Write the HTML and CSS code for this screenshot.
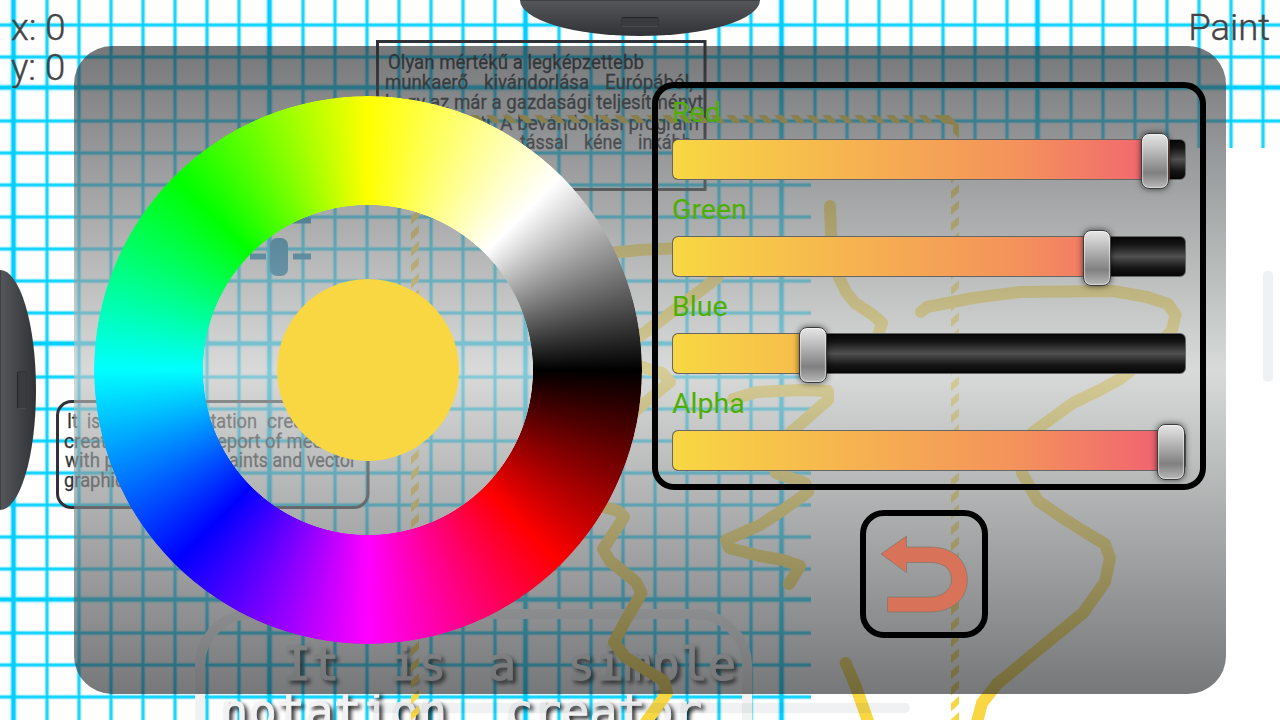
FILE: index.html
```html
<!DOCTYPE html>
<html lang="en">
<head>
<meta charset="utf-8">
<title>Paint</title>
<link rel="stylesheet" href="styles.css">
</head>
<body>
<main class="app">
  <svg class="canvas" width="1280" height="720" viewBox="0 0 1280 720">
    <defs>
      <pattern id="grid" x="13.5" y="87.5" width="256" height="256" patternUnits="userSpaceOnUse">
        <g class="halo">
          <path d="M0 0V256M256 0V256M0 0H256M0 256H256" stroke-width="7"/>
          <path d="M33.5 0V256M65.5 0V256M97.5 0V256M129.5 0V256M161.5 0V256M193.5 0V256M225.5 0V256M0 33.5H256M0 65.5H256M0 97.5H256M0 129.5H256M0 161.5H256M0 193.5H256M0 225.5H256" stroke-width="5"/>
        </g>
        <g class="core">
          <path d="M0 0V256M256 0V256M0 0H256M0 256H256" stroke-width="4.2"/>
          <path d="M33.5 0V256M65.5 0V256M97.5 0V256M129.5 0V256M161.5 0V256M193.5 0V256M225.5 0V256M0 33.5H256M0 65.5H256M0 97.5H256M0 129.5H256M0 161.5H256M0 193.5H256M0 225.5H256" stroke-width="2.4"/>
        </g>
      </pattern>
      <pattern id="hatchLeft" x="411" y="225" width="8" height="16" patternUnits="userSpaceOnUse">
        <path d="M8 0V8L0 15.5V7.5Z" fill="#f8d743"/>
      </pattern>
      <pattern id="hatchRight" x="951" y="184" width="8" height="16" patternUnits="userSpaceOnUse">
        <path d="M8 0V8L0 15.5V7.5Z" fill="#f8d743"/>
      </pattern>
      <pattern id="hatchTop" x="806" y="115" width="16" height="8" patternUnits="userSpaceOnUse">
        <path d="M0 0H8L15.500 8H7.500Z" fill="#f8d743"/>
      </pattern>
    </defs>
    <path d="M0 0H1280V148H811V720H0Z" fill="url(#grid)"/>

    <rect class="frame" x="377.500" y="41.500" width="327.500" height="148"/>
    <g class="note">
      <text x="388" y="69" textLength="256" lengthAdjust="spacingAndGlyphs">Olyan mértékű a legképzettebb</text>
      <text x="385" y="89" textLength="83" lengthAdjust="spacingAndGlyphs">munkaerő</text>
      <text x="484" y="89" textLength="105" lengthAdjust="spacingAndGlyphs">kivándorlása</text>
      <text x="605" y="89" textLength="88" lengthAdjust="spacingAndGlyphs">Európából,</text>
      <text x="385" y="109" textLength="318" lengthAdjust="spacingAndGlyphs">hogy az már a gazdasági teljesítményt</text>
      <text x="480" y="129.500" textLength="219" lengthAdjust="spacingAndGlyphs">ti. A bevándorlási program</text>
      <text x="520" y="149" textLength="48" lengthAdjust="spacingAndGlyphs">tással</text>
      <text x="584" y="149" textLength="38" lengthAdjust="spacingAndGlyphs">kéne</text>
      <text x="638" y="149" textLength="54" lengthAdjust="spacingAndGlyphs">inkább</text>
    </g>

    <rect class="frame" x="57.500" y="401.500" width="310.500" height="106" rx="14"/>
    <g class="note">
      <text x="67" y="428" textLength="11" lengthAdjust="spacingAndGlyphs">It</text>
      <text x="87" y="428" textLength="13" lengthAdjust="spacingAndGlyphs">is</text>
      <text x="190" y="428" textLength="67" lengthAdjust="spacingAndGlyphs">notation</text>
      <text x="267" y="428" textLength="60" lengthAdjust="spacingAndGlyphs">creator</text>
      <text x="64" y="447.500" textLength="53" lengthAdjust="spacingAndGlyphs">create</text>
      <text x="211" y="447.500" textLength="112" lengthAdjust="spacingAndGlyphs">report of med</text>
      <text x="65" y="467" textLength="50" lengthAdjust="spacingAndGlyphs">with p</text>
      <text x="219" y="467" textLength="137" lengthAdjust="spacingAndGlyphs">paints and vector</text>
      <text x="64" y="486.500" textLength="70" lengthAdjust="spacingAndGlyphs">graphics</text>
    </g>

    <path class="tool" d="M250 253.500H266V259.500H250ZM293 253.500H311V259.500H293ZM285 217.500H311V223.500H285Z"/>
    <rect class="tool" x="270" y="238" width="18" height="38" rx="7"/>

    <rect class="bigframe" x="200" y="614" width="547" height="200" rx="52"/>
    <g class="bignote">
      <text x="283" y="680">It</text>
      <text x="390" y="680">is</text>
      <text x="488" y="680">a</text>
      <text x="567" y="680" textLength="169">simple</text>
      <text x="220" y="727" textLength="227">notation</text>
      <text x="505" y="727" textLength="197">creator</text>
    </g>

    <rect x="411" y="119" width="8" height="601" fill="url(#hatchLeft)"/>
    <rect x="415" y="115" width="523" height="8" fill="url(#hatchTop)"/>
    <path d="M934.500 115H949L959 125V138L953 133V125L943 123Z" fill="#f8d743"/>
    <rect x="951" y="142" width="8" height="578" fill="url(#hatchRight)"/>

    <g class="ink">
      <path d="M830 206L831 233L839 277L846 292L855 303L873 315L882 323L878 336"/>
      <path d="M921 312L927 307L973 298L1020 292L1113 291L1147 297L1168 304L1175.500 315L1172 330L1150 355L1120 379L1100 390L1073 403L1033 432L1020 455L1022 473L1038 501L1063 518L1085 532L1105 544L1110 558L1105 582L1083 613L997 684L982 703L977 722"/>
      <path d="M845.700 663L856 687L869 724"/>
      <path d="M600 254L640 250L700 247L725 255L717 278L640 336L600 355L642 367L662 373L670 382L640 407L590 450L590 503L618 511L624 517L603 549L610 561L636 582L641.500 593L627 618L614 642L625 657L664 681L667 693L646 722"/>
      <path d="M733 399L757 392L800 390L828 391L828 400L790 433L770 455L776 473L805 483L808 492L783 510L760 525L726 540L729 548L760 556L783 560L800 566L789 584"/>
    </g>

    <rect class="scroll" x="370" y="703" width="540" height="10" rx="5"/>
    <rect class="scroll" x="1263" y="270.500" width="10" height="111.500" rx="5"/>
  </svg>

  <p class="readout">x: 0<br>y: 0</p>
  <p class="mode">Paint</p>
  <div class="drawer drawer-top"><i></i></div>
  <div class="drawer drawer-left"><i></i></div>

  <section class="panel">
    <div class="wheel"><div class="swatch"></div></div>
    <div class="side">
      <div class="sliders">
        <label>Red</label>
        <div class="track"><div class="fill" style="width:497px"></div><b style="left:468px"></b></div>
        <label>Green</label>
        <div class="track"><div class="fill" style="width:438px"></div><b style="left:410px"></b></div>
        <label>Blue</label>
        <div class="track"><div class="fill" style="width:154px"></div><b style="left:126px"></b></div>
        <label>Alpha</label>
        <div class="track"><div class="fill" style="width:512px"></div><b style="left:484px"></b></div>
      </div>
      <div class="back">
        <svg width="128" height="128" viewBox="860 510 128 128">
          <path d="M881 554L906.500 536V547H930C955 547 967.300 562 967.300 580C967.300 600 951 612 930 612H887.500V597H930C943 597 951.500 589 951.500 580C951.500 569 944 562.500 930 562.500H906.500V572.500Z"/>
        </svg>
      </div>
    </div>
  </section>
</main>
</body>
</html>
```
FILE: styles.css
```css
* { box-sizing: border-box; }
body { margin: 0; background: #fff; font-family: Roboto, "Noto Sans", sans-serif; }
.app { position: relative; width: 1280px; height: 720px; overflow: hidden; display: flex; }
.canvas { position: absolute; left: 0; top: 0; display: block; }
.halo path { stroke: #00cfff; stroke-opacity: .28; fill: none; }
.core path { stroke: #00cfff; fill: none; }
.frame { fill: none; stroke: #2f3337; stroke-width: 3; }
.note { font: 21px Roboto, sans-serif; fill: #2f3337; stroke: #2f3337; stroke-width: .3px; }
.tool { fill: #0a83b8; }
.bigframe { fill: none; stroke: #f2f2f2; stroke-width: 10; }
.bignote { font: 47px "DejaVu Sans Mono", monospace; fill: #f2f2f2; stroke: #f2f2f2; stroke-width: 1px; filter: drop-shadow(3px 3px 2px rgba(0,0,0,.85)); }
.ink path { fill: none; stroke: #f8d743; stroke-width: 12; stroke-linecap: round; stroke-linejoin: round; }
.scroll { fill: #3c5064; fill-opacity: .08; }

.readout, .mode { position: absolute; margin: 0; top: 8px; font-weight: 300; font-size: 36.500px; line-height: 40px; color: #444; -webkit-text-stroke: .4px #444; }
.readout { left: 11px; }
.mode { right: 10px; }

.drawer { position: absolute; overflow: hidden; display: flex; }
.drawer i { display: block; border-radius: 3px; background: #393b3e; border: 1px solid #333538; border-bottom-color: #47494c; }
.drawer-top { left: 520px; top: 0; width: 240px; height: 36px; justify-content: center; padding-top: 16px; border-radius: 0 0 120px 120px / 0 0 36px 36px; background: linear-gradient(#54565a, #303235); border-top: 1px solid #3e4043; }
.drawer-top i { width: 38px; height: 10px; border-top-color: #222426; }
.drawer-left { left: 0; top: 270px; width: 36px; height: 240px; align-items: center; padding-left: 16px; border-radius: 0 36px 36px 0 / 0 120px 120px 0; background: linear-gradient(90deg, #54565a, #303235); border-left: 1px solid #3e4043; }
.drawer-left i { width: 10px; height: 38px; border-left-color: #222426; }

.panel { position: relative; width: 1152px; height: 648px; margin: 46px 74px; border-radius: 38px; display: flex; padding: 36px 20px; background: linear-gradient(rgba(44,47,50,.65), rgba(196,198,197,.65) 50%, rgba(44,47,50,.65)); }
.wheel { width: 548px; height: 548px; margin-top: 14px; flex: none; display: grid; place-items: center; position: relative; }
.wheel::before { content: ""; position: absolute; inset: 0; border-radius: 50%; background: conic-gradient(#ff0, #fff 45deg, #000 90deg, #f00 135deg, #f0f 180deg, #00f 225deg, #0ff 270deg, #0f0 315deg, #ff0); -webkit-mask: radial-gradient(circle, transparent 164.700px, #000 165.300px); mask: radial-gradient(circle, transparent 164.700px, #000 165.300px); }
.swatch { width: 182px; height: 182px; border-radius: 50%; background: #f8d743; }

.side { margin-left: 10px; }
.sliders { width: 554px; height: 408px; border: 6px solid #000; border-radius: 22px; padding: 0 14px; }
.sliders label { display: block; height: 51px; padding-top: 8px; font-size: 28.500px; line-height: 33px; color: #4daf00; }
.track + label { height: 56px; padding-top: 13px; }
.track { position: relative; width: 514px; height: 41px; border-radius: 6px; background: linear-gradient(#060606, #151515 20%, #505050 50%, #151515 80%, #060606); border: 1px solid #666; overflow: visible; }
.fill { height: 39px; border-radius: 5px 0 0 5px; background: linear-gradient(90deg, #f8d743, #f4915c 348px, #f16072 497px) 0 0 / 512px 100%; border-right: 1px solid #8a4046; }
.track b { position: absolute; top: -7px; width: 28px; height: 56px; border-radius: 8px; border: 1.500px solid #3c3c3c; background: linear-gradient(#e6e6e6, #bdbdbd 30%, #808080 72%, #b8b8b8); box-shadow: 0 0 6px rgba(0,0,0,.65), inset 0 0 1px 1px rgba(255,255,255,.5); }
.back { width: 128px; height: 128px; margin: 20px 0 0 208px; border: 6px solid #000; border-radius: 24px; }
.back svg { display: block; margin: -6px; }
.back path { fill: #d87258; stroke: #6d776b; stroke-width: .6; }
```
